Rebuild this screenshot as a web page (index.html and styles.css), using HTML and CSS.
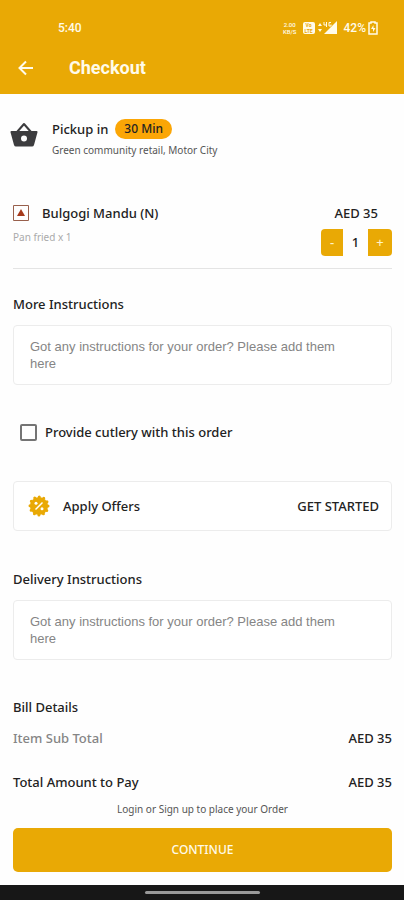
FILE: index.html
```html
<!DOCTYPE html>
<html lang="en">
<head>
<meta charset="utf-8">
<meta name="viewport" content="width=device-width, initial-scale=1">
<title>Checkout</title>
<link rel="stylesheet" href="styles.css">
</head>
<body>
<header class="top">
  <div class="status">
    <span class="time">5:40</span>
    <div class="indicators">
      <span class="speed"><span>2.00</span><span>KB/S</span></span>
      <span class="volte"><span>Vo</span><span>LTE</span></span>
      <svg class="signal" width="20" height="14" viewBox="0 0 20 14" aria-hidden="true">
        <path d="M0 5l2-3 2 3zM0 8h4l-2 3z" fill="currentColor"/>
        <path d="M19 0v13H6z" fill="currentColor"/>
        <path d="M6 1v3h3M8.500 1v5M13 1.500h-2v3.500h2V3.500" fill="none" stroke="currentColor"/>
      </svg>
      <span class="percent">42%</span>
      <svg width="10" height="14" viewBox="0 0 10 14" aria-hidden="true">
        <path d="M3 2V1h4v1h2v11H1V2z" fill="none" stroke="currentColor" stroke-width="1.500"/>
        <path d="M5.500 4L3 8h2v3l2.500-4h-2z" fill="currentColor"/>
      </svg>
    </div>
  </div>
  <div class="titlebar">
    <button class="back" type="button" aria-label="Back">
      <svg width="16" height="16" viewBox="0 0 16 16" aria-hidden="true"><path d="M15 8H2M8 1.500L1.500 8 8 14.500" fill="none" stroke="currentColor" stroke-width="2"/></svg>
    </button>
    <h1>Checkout</h1>
  </div>
</header>
<main>
  <section class="pickup">
    <svg class="basket" width="28" height="26" viewBox="0 0 28 26" aria-hidden="true">
      <path d="M7 10L14 2l7 8" fill="none" stroke="currentColor" stroke-width="2" stroke-linejoin="round"/>
      <path fill-rule="evenodd" d="M1.500 9h25q1.200 0 1 1.300l-3.500 12.700q-.5 1.500-2 1.500H6q-1.500 0-2-1.500L.500 10.300Q.3 9 1.500 9zM14 13.500a3 3 0 1 0 0 6 3 3 0 0 0 0-6z" fill="currentColor"/>
    </svg>
    <div>
      <p class="pickup-line">Pickup in <span class="pill">30 Min</span></p>
      <p class="address">Green community retail, Motor City</p>
    </div>
  </section>

  <section class="item">
    <div>
      <h2 class="item-name">
        <svg width="16" height="16" viewBox="0 0 16 16" aria-hidden="true"><path d="M.5.5h15v15H.5z" fill="none" stroke="#98604c"/><path d="M8 4l4 7H4z" fill="#a63a1c"/></svg>
        Bulgogi Mandu (N)
      </h2>
      <p class="variant">Pan fried x 1</p>
    </div>
    <div class="item-side">
      <span class="price">AED 35</span>
      <div class="stepper">
        <button type="button" aria-label="Decrease quantity">-</button>
        <output>1</output>
        <button type="button" aria-label="Increase quantity">+</button>
      </div>
    </div>
  </section>

  <section class="notes">
    <label for="more">More Instructions</label>
    <textarea id="more" rows="2" placeholder="Got any instructions for your order? Please add them here"></textarea>
  </section>

  <label class="cutlery"><input type="checkbox">Provide cutlery with this order</label>

  <section class="offers">
    <svg width="22" height="22" viewBox="0 0 22 22" aria-hidden="true">
      <circle cx="11" cy="11" r="9" fill="#e9a905"/>
      <circle cx="11" cy="11" r="9" fill="none" stroke="#e9a905" stroke-width="3" stroke-linecap="round" stroke-dasharray="0 4.712"/>
      <path d="M7.500 14.500l7-7" stroke="#fff" stroke-width="1.500"/>
      <circle cx="8" cy="8.200" r="1.500" fill="#fff"/><circle cx="14" cy="13.800" r="1.500" fill="#fff"/>
    </svg>
    <span>Apply Offers</span>
    <button type="button">GET STARTED</button>
  </section>

  <section class="notes">
    <label for="delivery">Delivery Instructions</label>
    <textarea id="delivery" rows="2" placeholder="Got any instructions for your order? Please add them here"></textarea>
  </section>

  <section class="bill">
    <h2>Bill Details</h2>
    <dl>
      <div class="subtotal"><dt>Item Sub Total</dt><dd>AED 35</dd></div>
      <div><dt>Total Amount to Pay</dt><dd>AED 35</dd></div>
    </dl>
  </section>
</main>
<footer>
  <p>Login or Sign up to place your Order</p>
  <button class="continue" type="button">CONTINUE</button>
</footer>
<div class="navbar"><span></span></div>
</body>
</html>
```

FILE: styles.css
```css
* { box-sizing: border-box; }
body, h1, h2, p, dl, dd { margin: 0; }
body {
  min-height: 100vh;
  display: flex;
  flex-direction: column;
  background: #fefefe;
  color: #222;
  font: 500 13px/20px "Noto Sans", sans-serif;
}
h2 { font-size: 13px; font-weight: 500; }
button {
  border: 0;
  padding: 0;
  background: none;
  color: inherit;
  font: inherit;
  cursor: pointer;
}
svg { display: block; flex: none; }

.top {
  padding: 16px 26px 6px 18px;
  background: #e9a905;
  color: #fffbea;
}
.status {
  display: flex;
  justify-content: space-between;
  align-items: center;
  height: 24px;
  padding-left: 40px;
  font-family: Roboto, sans-serif;
  font-size: 12px;
}
.indicators { display: flex; align-items: center; gap: 6px; }
.speed, .volte {
  display: flex;
  flex-direction: column;
  align-items: center;
  font-size: 6px;
  line-height: 7px;
}
.volte {
  width: 12px;
  border-radius: 2px;
  background: #fffbea;
  color: #e9a905;
  font-size: 5px;
  line-height: 6px;
  font-weight: 700;
}
.signal { margin-left: -3px; }
.percent { margin-right: -4px; }
.titlebar { display: flex; align-items: center; height: 40px; margin-top: 8px; }
.back { width: 16px; height: 24px; display: grid; place-items: center; }
h1 {
  margin-left: 35px;
  font: 700 18px/24px Roboto, sans-serif;
}

main { flex: 1; padding: 25px 12px 0 13px; }

.pickup { display: flex; gap: 14px; margin-left: -3px; }
.basket { margin-top: 3px; color: #3c3c3e; }
.pickup-line { display: flex; align-items: center; gap: 7px; }
.pill {
  padding: 0 9px;
  border-radius: 10px;
  background: #fba606;
  font-size: 12px;
}
.address { margin-top: 1px; font-size: 10px; font-weight: 400; color: #555; }

.item {
  display: flex;
  justify-content: space-between;
  margin-top: 43px;
  padding-bottom: 12px;
  border-bottom: 1px solid #e4e4e4;
}
.item-name { display: flex; align-items: center; gap: 13px; }
.variant { margin-top: 4px; font-size: 10px; font-weight: 400; color: #aaa; }
.item-side { display: flex; flex-direction: column; align-items: flex-end; gap: 6px; }
.price { margin-right: 14px; }
.stepper { display: grid; grid-template-columns: 22px 25px 24px; text-align: center; line-height: 27px; }
.stepper button { background: #e9a905; color: #fff3c8; }
.stepper button:first-child { border-radius: 4px 0 0 4px; }
.stepper button:last-child { border-radius: 0 4px 4px 0; }

.notes { display: flex; flex-direction: column; gap: 11px; margin-top: 25px; }
textarea {
  display: block;
  width: 100%;
  height: 60px;
  padding: 12px 32px 12px 16px;
  border: 1px solid #ececec;
  border-radius: 4px;
  background: #fff;
  color: #222;
  font: 13px/17px "Liberation Sans", sans-serif;
  resize: none;
  overflow: hidden;
}
textarea::placeholder { color: #858585; opacity: 1; }

.cutlery {
  display: flex;
  align-items: center;
  gap: 8px;
  height: 20px;
  margin: 37px 0 0 7px;
}
.cutlery input {
  appearance: none;
  width: 17px;
  height: 17px;
  margin: 0;
  border: 2px solid #747474;
  border-radius: 2px;
}
.cutlery input:checked { background: #e9a905; }

.offers {
  display: flex;
  align-items: center;
  height: 50px;
  margin-top: 39px;
  padding: 0 12px 0 14px;
  border: 1px solid #ececec;
  border-radius: 4px;
  background: #fff;
}
.offers span { margin-left: 13px; }
.offers button { margin-left: auto; }
.offers + .notes { margin-top: 38px; }

.bill { margin-top: 37px; }
.bill dl { display: flex; flex-direction: column; gap: 24px; margin-top: 11px; }
.bill dl div { display: flex; justify-content: space-between; }
.bill .subtotal dt { color: #858585; }

footer { padding: 7px 12px 13px 13px; }
footer p { font-size: 10px; font-weight: 400; line-height: 18px; text-align: center; color: #555; }
.continue {
  display: block;
  width: 100%;
  height: 44px;
  margin-top: 10px;
  border-radius: 5px;
  background: #e9a905;
  color: #fffbea;
  font-size: 12px;
}
.navbar {
  display: grid;
  place-items: center;
  height: 15px;
  background: #171717;
}
.navbar span { width: 115px; height: 3px; border-radius: 2px; background: #999; }
```
